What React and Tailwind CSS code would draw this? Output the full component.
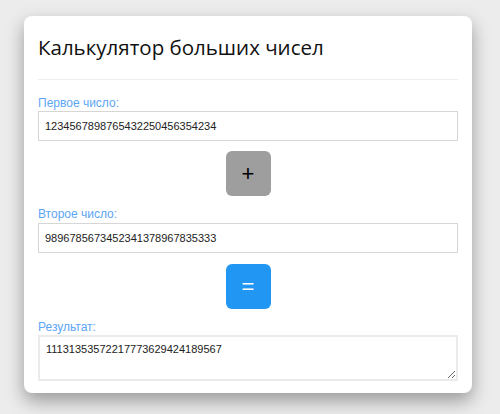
import React, { useState } from 'react';

const App = () => {
  const [a, setA] = useState('1234567898765432250456354234');
  const [b, setB] = useState('9896785673452341378967835333');
  const [result, setResult] = useState('11131353572217773629424189567');

  const add = () => {
    try {
      setResult((BigInt(a) + BigInt(b)).toString());
    } catch (e) {
      setResult('Ошибка');
    }
  };

  return (
    <div className="min-h-[414px] bg-[#ececec] pt-4 px-6 font-['Liberation_Sans',Arial,sans-serif]">
      <div className="w-[448px] bg-white rounded-lg px-[14px] pt-[17px] pb-[12px] shadow-[0_8px_18px_rgba(0,0,0,0.35)]">
        {/* Header */}
        <h2 className="font-['Open_Sans',sans-serif] text-[20.5px] leading-7 text-[#111] pb-[18px] border-b border-[#eeeeee]">
          Калькулятор больших чисел
        </h2>

        {/* First number */}
        <label className="block mt-[16px] text-[12px] leading-[14px] text-[#5ca5f5]">Первое число:</label>
        <input
          value={a}
          onChange={(e) => setA(e.target.value)}
          className="block w-full h-[30px] mt-px px-[6px] border border-[#d6d6d6] text-[11px] text-[#222] outline-none"
        />

        <div className="flex justify-center mt-[10px]">
          <button className="w-[45px] h-[45px] rounded-[6px] bg-[#9e9e9e] text-black text-[22px] leading-none">
            +
          </button>
        </div>

        {/* Second number */}
        <label className="block mt-[11px] text-[12px] leading-[14px] text-[#5ca5f5]">Второе число:</label>
        <input
          value={b}
          onChange={(e) => setB(e.target.value)}
          className="block w-full h-[30px] mt-[2px] px-[6px] border border-[#d6d6d6] text-[11px] text-[#222] outline-none"
        />

        <div className="flex justify-center mt-[11px]">
          <button
            onClick={add}
            className="w-[45px] h-[45px] rounded-[6px] bg-[#2196f3] text-white text-[22px] leading-none"
          >
            =
          </button>
        </div>

        {/* Result */}
        <label className="block mt-[11px] text-[12px] leading-[14px] text-[#5ca5f5]">Результат:</label>
        <textarea
          value={result}
          readOnly
          className="block w-full h-[46px] mt-px px-[6px] py-[4px] border-2 border-[#ebebeb] text-[11px] text-[#222] outline-none"
        />
      </div>
    </div>
  );
};

export default App;
